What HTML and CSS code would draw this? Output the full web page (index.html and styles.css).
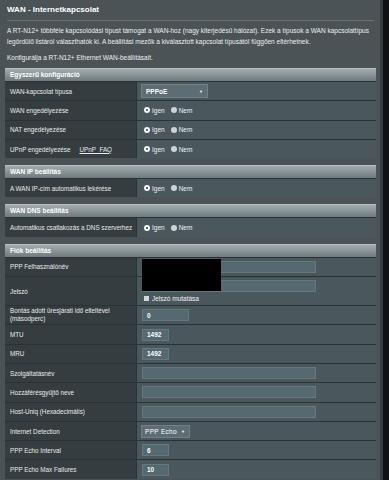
FILE: index.html
```html
<!DOCTYPE html>
<html lang="hu">
<head>
  <meta charset="UTF-8">
  <title>WAN - Internetkapcsolat</title>
  <link rel="stylesheet" href="styles.css">
</head>
<body>

<div class="page">
  <div class="content">
    <h1 class="title">WAN - Internetkapcsolat</h1>
    <div class="rule"></div>
    <p class="desc">A RT-N12+ többféle kapcsolódási típust támogat a WAN-hoz (nagy kiterjedésű hálózat). Ezek a típusok a WAN kapcsolattípus<br>legördülő listáról választhatók ki. A beállítási mezők a kiválasztott kapcsolat típusától függően eltérhetnek.</p>
    <p class="desc konfig">Konfigurálja a RT-N12+ Ethernet WAN-beállításait.</p>

    <div class="section">
      <div class="sec-head">Egyszerű konfiguráció</div>
      <div class="row">
        <div class="label">WAN-kapcsolat típusa</div>
        <div class="value"><span class="select wide">PPPoE<span class="arrow">▼</span></span></div>
      </div>
      <div class="row">
        <div class="label">WAN engedélyezése</div>
        <div class="value"><span class="radio on"></span>Igen<span class="radio"></span>Nem</div>
      </div>
      <div class="row">
        <div class="label">NAT engedélyezése</div>
        <div class="value"><span class="radio on"></span>Igen<span class="radio"></span>Nem</div>
      </div>
      <div class="row">
        <div class="label">UPnP engedélyezése <a class="faq">UPnP_FAQ</a></div>
        <div class="value"><span class="radio on"></span>Igen<span class="radio"></span>Nem</div>
      </div>
    </div>

    <div class="section">
      <div class="sec-head">WAN IP beállítás</div>
      <div class="row">
        <div class="label">A WAN IP-cím automatikus lekérése</div>
        <div class="value"><span class="radio on"></span>Igen<span class="radio"></span>Nem</div>
      </div>
    </div>

    <div class="section">
      <div class="sec-head">WAN DNS beállítás</div>
      <div class="row">
        <div class="label">Automatikus csatlakozás a DNS szerverhez</div>
        <div class="value"><span class="radio on"></span>Igen<span class="radio"></span>Nem</div>
      </div>
    </div>

    <div class="section">
      <div class="sec-head">Fiók beállítás</div>
      <div class="row">
        <div class="label">PPP Felhasználónév</div>
        <div class="value masked"><span class="input long"></span><span class="redact"></span></div>
      </div>
      <div class="row tall">
        <div class="label">Jelszó</div>
        <div class="value stack">
          <span class="input long"></span>
          <span class="check-line"><span class="checkbox"></span>Jelszó mutatása</span>
        </div>
      </div>
      <div class="row">
        <div class="label two-line">Bontás adott üresjárati idő elteltével<br>(másodperc)</div>
        <div class="value"><span class="input mid">0</span></div>
      </div>
      <div class="row">
        <div class="label">MTU</div>
        <div class="value"><span class="input short">1492</span></div>
      </div>
      <div class="row">
        <div class="label">MRU</div>
        <div class="value"><span class="input short">1492</span></div>
      </div>
      <div class="row">
        <div class="label">Szolgáltatásnév</div>
        <div class="value"><span class="input long"></span></div>
      </div>
      <div class="row">
        <div class="label">Hozzáférésgyűjtő neve</div>
        <div class="value"><span class="input long"></span></div>
      </div>
      <div class="row">
        <div class="label">Host-Uniq (Hexadecimális)</div>
        <div class="value"><span class="input long"></span></div>
      </div>
      <div class="row">
        <div class="label">Internet Detection</div>
        <div class="value"><span class="select narrow">PPP Echo<span class="arrow">▼</span></span></div>
      </div>
      <div class="row">
        <div class="label">PPP Echo Interval</div>
        <div class="value"><span class="input short">6</span></div>
      </div>
      <div class="row">
        <div class="label">PPP Echo Max Failures</div>
        <div class="value"><span class="input short">10</span></div>
      </div>
    </div>
  </div>
</div>

</body>
</html>
```

FILE: styles.css
```css
* { box-sizing: border-box; }
html, body {
  margin: 0;
  height: 480px;
  overflow: hidden;
}
body {
  background: #0f1112;
  font-family: 'Liberation Sans', Arial, sans-serif;
  color: #fff;
}
.page {
  width: 383px;
  height: 480px;
  background: #4b5356;
  border-right: 3px solid #363c3f;
}
.content {
  padding: 0 0 0 5px;
  width: 376px;
}
.title {
  margin: 0;
  padding: 4px 2px 0;
  font-size: 8px;
  line-height: 11px;
  font-weight: bold;
}
.rule {
  height: 1px;
  margin: 5px 2px 0;
  background: #687174;
}
.desc {
  margin: 4px 2px 0;
  font-size: 6.5px;
  line-height: 11px;
  color: #eef0f0;
}
.desc.konfig {
  margin-top: 5px;
  margin-bottom: 5px;
}
.section {
  margin-bottom: 7px;
}
.sec-head {
  height: 13px;
  padding-left: 5px;
  background: linear-gradient(#a1abae, #6f7b7f);
  border-top: 1px solid #b7c0c2;
  font-size: 6.5px;
  line-height: 12px;
  font-weight: bold;
  color: #fff;
}
.row {
  display: grid;
  grid-template-columns: 131px 1fr;
  height: 19.3px;
  border-top: 1px solid #2a3235;
}
.row.tall { height: 29px; }
.label {
  display: flex;
  align-items: center;
  padding-left: 5px;
  background: #353d40;
  font-size: 6.3px;
  white-space: nowrap;
  color: #e9ebeb;
}
.label.two-line {
  line-height: 8px;
}
.faq {
  margin-left: 9px;
  text-decoration: underline;
  color: #e9ebeb;
}
.value {
  display: flex;
  align-items: center;
  padding-left: 5px;
  background: #4a585d;
  border-left: 1px solid #2a3235;
  font-size: 6.5px;
  white-space: nowrap;
  color: #f2f2f2;
}
.value.stack {
  flex-direction: column;
  align-items: flex-start;
  justify-content: center;
  gap: 3px;
}
.value.masked { position: relative; }
.radio {
  width: 6px;
  height: 6px;
  margin: 0 2px 0 2px;
  border-radius: 50%;
  background: #cfd3d4;
}
.radio.on {
  background: #3c4447;
  border: 2px solid #f4f4f4;
}
.value .radio:not(.on) { margin-left: 6px; }
.select {
  display: flex;
  align-items: center;
  height: 14px;
  padding-left: 4px;
  background: #5e6d73;
  border: 1px solid #6f8086;
  font-weight: bold;
  color: #fff;
}
.select.wide { width: 67px; margin-left: -1px; }
.select.narrow {
  width: 49px;
  height: 13px;
  margin-left: -1px;
  padding-left: 3px;
  font-weight: normal;
  letter-spacing: 0.3px;
}
.arrow {
  margin-left: auto;
  margin-right: 4px;
  font-size: 4px;
  letter-spacing: 0;
}
.input {
  display: flex;
  align-items: center;
  height: 12px;
  padding-left: 4px;
  background: #566870;
  border: 1px solid #64787f;
  font-weight: bold;
  color: #fff;
}
.input.long { width: 174px; }
.input.mid { width: 47px; }
.input.short { width: 27px; }
.redact {
  position: absolute;
  left: 5px;
  top: 1px;
  width: 79px;
  height: 32px;
  background: #000;
  z-index: 2;
}
.check-line {
  display: flex;
  align-items: center;
  gap: 3px;
  margin-left: 2px;
}
.checkbox {
  width: 5px;
  height: 5px;
  background: #d3d6d7;
}
```
